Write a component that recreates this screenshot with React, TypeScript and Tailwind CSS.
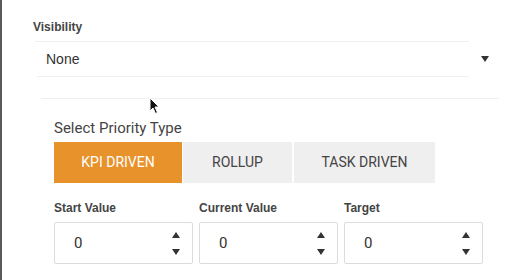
import React from "react";

const Up = () => (
  <svg width="8" height="6" viewBox="0 0 8 6"><path d="M0 6 L4 0 L8 6 Z" fill="#333" /></svg>
);
const Down = () => (
  <svg width="8" height="6" viewBox="0 0 8 6"><path d="M0 0 L8 0 L4 6 Z" fill="#333" /></svg>
);

function NumberBox({ label }: { label: string }) {
  return (
    <div className="flex flex-col w-[139px]">
      <div className="text-[12px] font-bold text-[#444] leading-[16px] h-[16px] font-['Liberation_Sans',Arial,sans-serif]">{label}</div>
      <div className="mt-[6px] h-[42px] border border-[#dcdcdc] rounded-[2px] flex items-center pl-[19px] pr-[12px]">
        <span className="text-[15px] text-[#333] font-['Roboto',sans-serif]">0</span>
        <div className="ml-auto flex flex-col gap-[11px] items-center">
          <Up />
          <Down />
        </div>
      </div>
    </div>
  );
}

export default function App() {
  return (
    <div className="relative w-[532px] h-[280px] bg-white overflow-hidden border-l-2 border-[#5a5a5a] font-['Roboto',sans-serif]">
      <div className="pt-[19px] pl-[31px]">
        <div className="text-[12px] font-bold text-[#444] leading-[16px] font-['Liberation_Sans',Arial,sans-serif]">Visibility</div>
        <div className="mt-[6px] ml-[2px] w-[434px] h-px bg-[#efefef]" />
        <div className="flex items-center h-[34px] pl-[13px] w-[456px]">
          <span className="text-[14px] text-[#333] font-['Liberation_Sans',Arial,sans-serif]">None</span>
          <svg className="ml-auto" width="8" height="6" viewBox="0 0 8 6"><path d="M0 0 L8 0 L4 6 Z" fill="#333" /></svg>
        </div>
        <div className="ml-[4px] w-[432px] h-px bg-[#efefef]" />
        <div className="mt-[21px] ml-[8px] w-[458px] h-px bg-[#efefef]" />
      </div>
      <div className="pl-[52px]">
        <div className="mt-[20px] text-[15px] text-[#444] leading-[18px]">Select Priority Type</div>
        <div className="mt-[5px] flex h-[41px] gap-px">
          <div className="w-[128px] bg-[#e8922b] flex items-center justify-center text-white text-[14px]">KPI DRIVEN</div>
          <div className="w-[109px] bg-[#efefef] flex items-center justify-center text-[#444] text-[14px]">ROLLUP</div>
          <div className="w-[141px] ml-px bg-[#efefef] flex items-center justify-center text-[#444] text-[14px]">TASK DRIVEN</div>
        </div>
        <div className="mt-[17px] flex gap-[6px]">
          <NumberBox label="Start Value" />
          <NumberBox label="Current Value" />
          <NumberBox label="Target" />
        </div>
      </div>
      <svg className="absolute left-[147px] top-[97px]" width="12" height="18" viewBox="0 0 12 18">
        <path d="M1 1 L1 14 L4 11 L6.5 16.5 L8.5 15.5 L6 10 L10 10 Z" fill="#111" stroke="#fff" strokeWidth="1" />
      </svg>
    </div>
  );
}
